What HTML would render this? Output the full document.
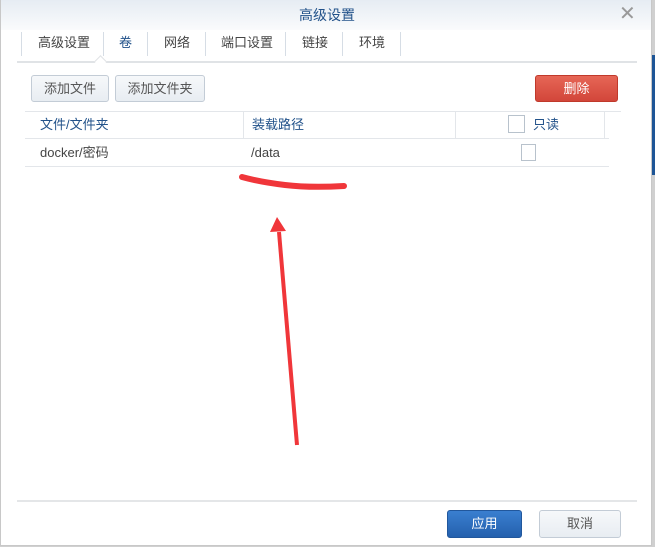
<!DOCTYPE html>
<html><head><meta charset="utf-8"><style>
*{margin:0;padding:0;box-sizing:border-box}
body{width:655px;height:547px;overflow:hidden;background:#d0d0d0;position:relative;font-family:"Liberation Sans","Noto Sans CJK SC",sans-serif;font-size:13px;color:#444}
.dlg{position:absolute;left:1px;top:0;width:650px;height:545px;background:#fff;box-shadow:0 0 0 1px #c8c8c8}
.hdr{position:absolute;left:0;top:0;width:100%;height:30px;background:linear-gradient(#e6ecf3,#fafbfc)}
.t{position:absolute;white-space:nowrap;line-height:16px;height:16px}
.vs{position:absolute;width:1px;background:#d6dde5}
.btn{position:absolute;height:27px;border:1px solid #c3ccd6;border-radius:3px;background:linear-gradient(#f6f8fa,#e8edf2);text-align:center;line-height:25px;color:#555}
.hl{position:absolute;height:1px;background:#e3e6ea}
.cb{position:absolute;border:1px solid #b8c2cc;background:#fff}
</style></head><body>
<div style="position:absolute;right:0;top:55px;width:4px;height:120px;background:#1e5596"></div>
<div style="position:absolute;left:0;top:55px;width:1px;height:105px;background:#1e5596"></div>
<div class="dlg">
<div class="hdr"></div>
<div class="t" style="left:298px;top:7px;font-size:14px;color:#22528a">高级设置</div>
<div class="t" style="left:618px;top:4px;font-size:20px;line-height:20px;color:#999">✕</div>
<div class="vs" style="left:20px;top:32px;height:24px"></div>
<div class="vs" style="left:102px;top:32px;height:24px"></div>
<div class="vs" style="left:146px;top:32px;height:24px"></div>
<div class="vs" style="left:204px;top:32px;height:24px"></div>
<div class="vs" style="left:284px;top:32px;height:24px"></div>
<div class="vs" style="left:341px;top:32px;height:24px"></div>
<div class="vs" style="left:399px;top:32px;height:24px"></div>
<div class="t" style="left:37px;top:35px">高级设置</div>
<div class="t" style="left:118px;top:35px;color:#22528a">卷</div>
<div class="t" style="left:163px;top:35px">网络</div>
<div class="t" style="left:220px;top:35px">端口设置</div>
<div class="t" style="left:301px;top:35px">链接</div>
<div class="t" style="left:358px;top:35px">环境</div>
<div style="position:absolute;left:16px;top:61px;width:620px;height:2px;background:#e0e3e6"></div>
<div style="position:absolute;left:95px;top:57px;width:9px;height:9px;background:#fff;border-left:1px solid #e0e3e6;border-top:1px solid #e0e3e6;transform:rotate(45deg)"></div>
<div class="btn" style="left:30px;top:75px;width:78px">添加文件</div>
<div class="btn" style="left:114px;top:75px;width:90px">添加文件夹</div>
<div class="btn" style="left:534px;top:75px;width:83px;background:linear-gradient(#e66656,#d2463a);border-color:#c0392b;color:#fff">删除</div>
<div class="hl" style="left:24px;top:111px;width:596px"></div>
<div class="hl" style="left:24px;top:138px;width:584px"></div>
<div class="hl" style="left:24px;top:166px;width:584px"></div>
<div class="vs" style="left:242px;top:112px;height:26px;background:#e3e6ea"></div>
<div class="vs" style="left:454px;top:112px;height:26px;background:#e3e6ea"></div>
<div class="vs" style="left:603px;top:112px;height:26px;background:#e3e6ea"></div>
<div class="t" style="left:39px;top:117px;color:#22528a">文件/文件夹</div>
<div class="t" style="left:251px;top:117px;color:#22528a">装载路径</div>
<div class="cb" style="left:507px;top:115px;width:17px;height:18px"></div>
<div class="t" style="left:532px;top:117px;color:#22528a">只读</div>
<div class="t" style="left:39px;top:145px">docker/密码</div>
<div class="t" style="left:250px;top:145px">/data</div>
<div class="cb" style="left:520px;top:144px;width:15px;height:17px"></div>
<div style="position:absolute;left:16px;top:500px;width:620px;height:2px;background:#e4e6e8"></div>
<div class="btn" style="left:446px;top:510px;width:75px;height:28px;background:linear-gradient(#3a7fd0,#2460ad);border-color:#21579c;color:#fff">应用</div>
<div class="btn" style="left:538px;top:510px;width:82px;height:28px">取消</div>
</div>
<svg style="position:absolute;left:0;top:0" width="655" height="547">
<path d="M242 177 Q260 182 285 185 Q310 188 344 186" stroke="#f0363a" stroke-width="6" fill="none" stroke-linecap="round"/>
<path d="M297 445 L279 232" stroke="#f0363a" stroke-width="4" fill="none"/>
<path d="M270 232 L277 217 L286 231 Z" fill="#f0363a"/>
</svg>
</body></html>
